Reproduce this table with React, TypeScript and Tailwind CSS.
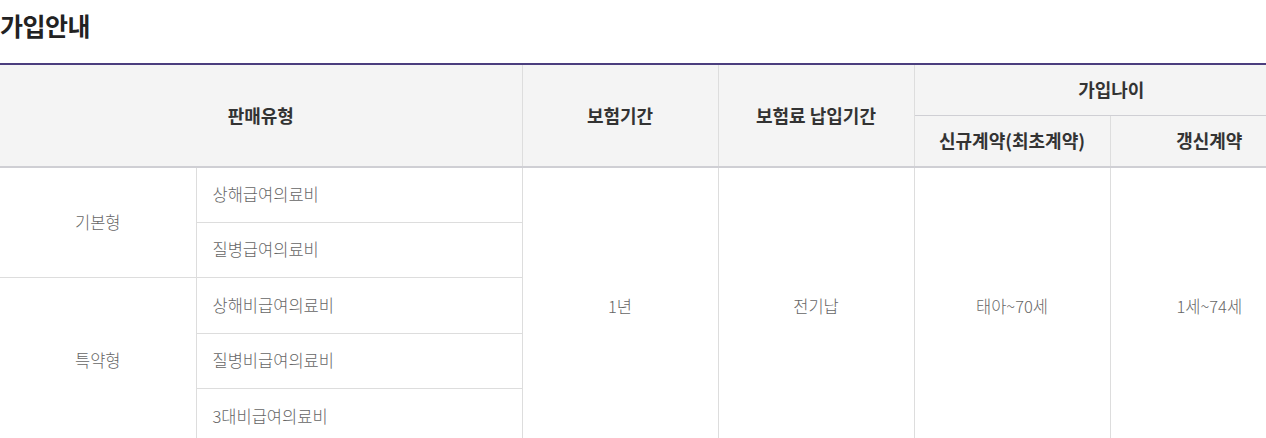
const rows = [
  { group: "기본형", span: 2, name: "상해급여의료비" },
  { group: null, span: 0, name: "질병급여의료비" },
  { group: "특약형", span: 3, name: "상해비급여의료비" },
  { group: null, span: 0, name: "질병비급여의료비" },
  { group: null, span: 0, name: "3대비급여의료비" },
];

export default function App() {
  return (
    <div className="w-[1266px] h-[438px] overflow-hidden bg-white font-['Noto_Sans_CJK_KR','Noto_Sans',sans-serif]">
      <h2 className="h-[63px] pt-[6px] text-[25px] font-bold leading-[38px] tracking-[-0.5px] text-[#222]">가입안내</h2>
      <table className="table-fixed w-[1308px] border-collapse border-t-2 border-[#4b3e7e]">
        <colgroup>
          <col className="w-[196px]" />
          <col className="w-[326px]" />
          <col className="w-[196px]" />
          <col className="w-[196px]" />
          <col className="w-[196px]" />
          <col className="w-[198px]" />
        </colgroup>
        <thead className="bg-[#f4f4f4] text-[18px] font-bold text-[#333]">
          <tr className="h-[51px]">
            <th colSpan={2} rowSpan={2} className="border-b-2 border-b-[#cfcfd4] font-bold">판매유형</th>
            <th rowSpan={2} className="border-x border-x-[#dddddd] border-b-2 border-b-[#cfcfd4] font-bold">보험기간</th>
            <th rowSpan={2} className="border-x border-x-[#dddddd] border-b-2 border-b-[#cfcfd4] font-bold">보험료 납입기간</th>
            <th colSpan={2} className="border-l border-l-[#dddddd] border-b border-b-[#cfcfd4] font-bold">가입나이</th>
          </tr>
          <tr className="h-[52px]">
            <th className="border-x border-x-[#dddddd] border-b-2 border-b-[#cfcfd4] font-bold">신규계약(최초계약)</th>
            <th className="border-b-2 border-b-[#cfcfd4] font-bold">갱신계약</th>
          </tr>
        </thead>
        <tbody className="text-[16.5px] font-light text-[#666]">
          {rows.map((r, i) => (
            <tr key={r.name} className={i === 0 ? "h-[55px]" : "h-[55.5px]"}>
              {r.group && (
                <td rowSpan={r.span} className="border-b border-[#dddddd] text-center">{r.group}</td>
              )}
              <td className="border-x border-b border-[#dddddd] pl-4">{r.name}</td>
              {i === 0 && (
                <>
                  <td rowSpan={5} className="border-x border-[#dddddd] text-center">1년</td>
                  <td rowSpan={5} className="border-x border-[#dddddd] text-center">전기납</td>
                  <td rowSpan={5} className="border-x border-[#dddddd] text-center">태아~70세</td>
                  <td rowSpan={5} className="text-center">1세~74세</td>
                </>
              )}
            </tr>
          ))}
        </tbody>
      </table>
    </div>
  );
}
